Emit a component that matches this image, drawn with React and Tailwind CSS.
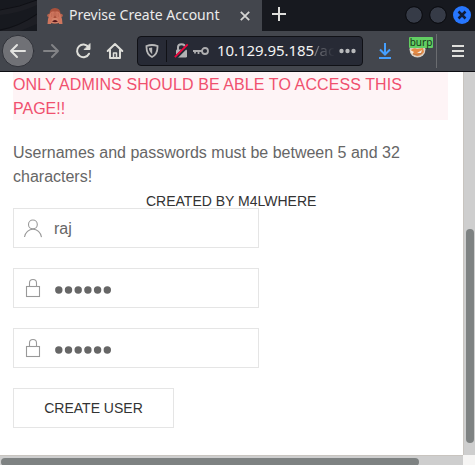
import React from 'react';

const Lock = () => (
  <svg width="20" height="20" viewBox="0 0 20 20" fill="none" stroke="#999" strokeWidth="1.1">
    <rect width="13" height="10" x="3.5" y="8.5" />
    <path d="M6.5,8 L6.5,4.88 C6.5,3.01 8.07,1.5 10,1.5 C11.93,1.5 13.5,3.01 13.5,4.88 L13.5,8" />
  </svg>
);

const User = () => (
  <svg width="20" height="20" viewBox="0 0 20 20" fill="none" stroke="#999" strokeWidth="1.1">
    <circle cx="9.9" cy="6.4" r="4.4" />
    <path d="M1.5,19 C2.3,14.5 5.8,11.2 10,11.2 C14.2,11.2 17.7,14.6 18.5,19.2" />
  </svg>
);

const Monkey = () => (
  <svg className="ml-[10px] shrink-0" width="16" height="16" viewBox="0 0 16 16">
    <path d="M2.5 6Q2.500 0 8 0Q13.500 0 13.500 6L14 14Q8 17 2 14Z" fill="#a9513c" />
    <circle cx="1.9" cy="7.500" r="1.7" fill="#b5634e" />
    <circle cx="14.1" cy="7.500" r="1.7" fill="#b5634e" />
    <path d="M3 10H13L12.500 14.500Q8 16.500 3.500 14.500Z" fill="#d5846b" />
    <path d="M.5 16L1 11L3 5L5 3.500H7.700V7.500Q6.500 10.500 5 11L4 16Z" fill="#cf765e" />
    <path d="M15.500 16L15 11L13 5L11 3.500H8.300V7.500Q9.500 10.500 11 11L12 16Z" fill="#cf765e" />
    <path d="M4.500 5V9M6.200 4.700V8.500M11.500 5V9M9.800 4.700V8.500" stroke="#b9624c" strokeWidth=".5" />
    <path d="M5 13.500Q8 10.500 11 13.500Q8 14.800 5 13.500Z" fill="#54151b" />
  </svg>
);

const TitleBar = () => (
  <div className="flex h-[31px] bg-[#17191f]">
    <svg className="shrink-0" width="37" height="31">
      <path d="M0 9Q20 6 37 0V5Q20 13 0 15ZM0 31Q20 26 37 15V24L20 31Z" fill="#1d1e24" />
      <path d="M0 10Q20 7 37 0M0 30Q18 27 37 14" fill="none" stroke="#0f1015" strokeWidth="1" />
    </svg>
    <div className="flex w-[225px] items-center bg-[#43464d]">
      <Monkey />
      <span className="ml-[6px] w-[152px] shrink-0 whitespace-nowrap pb-[2px] font-['Noto_Sans',sans-serif] text-[14px] leading-[28px] text-[#ebebeb]">Previse Create Account</span>
      <svg className="ml-[19px] shrink-0" width="10" height="10" fill="none" stroke="#d4d4d2" strokeWidth="1.8"><path d="M.8 .8L9.2 9.2M9.2 .8L.8 9.2" /></svg>
    </div>
    <svg className="mt-[7px] ml-[10px] shrink-0" width="14" height="14" fill="none" stroke="#dededb" strokeWidth="2"><path d="M7 0V14M0 7H14" /></svg>
    <svg className="ml-auto shrink-0" width="72" height="31">
      <circle cx="11" cy="15" r="8.3" fill="#363b47" stroke="#08090d" />
      <circle cx="35" cy="15" r="8.3" fill="#363b47" stroke="#08090d" />
      <circle cx="59" cy="15" r="9" fill="#2777ff" />
      <path d="M55.5 11.5L62.5 18.5M62.5 11.5L55.5 18.5" stroke="#101c36" strokeWidth="2.5" />
    </svg>
  </div>
);

const AddressBar = () => (
  <div className="flex h-[30px] w-[226px] items-center rounded-[4px] border border-[#101116] bg-[#272a35]">
    <svg className="ml-[7px] shrink-0" width="14" height="14" viewBox="0 0 14 14" fill="none" stroke="#b8b8b8" strokeWidth="1.8">
      <path d="M1.5 2Q7 0 12.5 2Q12.9 10 7 13Q1.1 10 1.5 2Z" />
      <path d="M7.2 3.4V10.3Q3.9 7.5 4 4Z" fill="#b8b8b8" stroke="none" />
    </svg>
    <div className="ml-[7px] h-[22px] w-px shrink-0 bg-[#101116]" />
    <svg className="ml-[7px] shrink-0" width="15" height="16" viewBox="0 0 15 16">
      <path d="M4 7V4Q4 1.2 7.5 1.2T11 4V7" fill="none" stroke="#b1b1b3" strokeWidth="2" />
      <rect x="2" y="6.5" width="11" height="8" rx="1.2" fill="#b1b1b3" />
      <path d="M1.8 14.5L14 2.2" stroke="#272a35" strokeWidth="3.5" />
      <path d="M.8 14.2L13.7 1.3" stroke="#f1073e" strokeWidth="1.8" />
    </svg>
    <svg className="ml-[4px] shrink-0" width="16" height="10" viewBox="0 0 16 10" fill="none" stroke="#adadaf" strokeWidth="1.8">
      <circle cx="12" cy="5" r="3" /><path d="M9 5H0M2 5V7.5M5.5 5V8" />
    </svg>
    <span className="ml-[8px] w-[116px] shrink-0 whitespace-nowrap pb-px font-['Noto_Sans',sans-serif] text-[15px] leading-[27px] tracking-[-0.06px] text-[#f2f2f2]">10.129.95.185<span className="bg-linear-to-r from-[#85868b] to-[#272a35] bg-clip-text text-transparent">/ac</span></span>
    <svg className="ml-[6px] shrink-0" width="17" height="6" fill="#b8b9bb"><circle cx="2.5" cy="3" r="2.2" /><circle cx="8.5" cy="3" r="2.2" /><circle cx="14.5" cy="3" r="2.2" /></svg>
  </div>
);

const Toolbar = () => (
  <div className="flex h-[41px] items-center border-b border-[#0c0d12] bg-[#43464d]">
    <svg className="shrink-0" width="137" height="40" fill="none" strokeLinecap="round" strokeLinejoin="round">
      <circle cx="18" cy="20" r="15.7" fill="#707176" stroke="#303239" />
      <path d="M25 20H11M17 14L11 20L17 26" stroke="#e3e3e0" strokeWidth="2" />
      <path d="M44 20H58M52 14L58 20L52 26" stroke="#828386" strokeWidth="2" />
      <path d="M88.5 16.2A6.3 6.3 0 1 0 89 22.7" stroke="#deded9" strokeWidth="2" />
      <path d="M90 13V18.5H84.5Z" fill="#deded9" stroke="#deded9" strokeWidth="1" />
      <path d="M107.7 20L115 13L122.3 20M110 19V27H120V19" stroke="#deded9" strokeWidth="2" />
      <path d="M113.5 26V22H116.5V26" stroke="#deded9" strokeWidth="1.5" />
    </svg>
    <AddressBar />
    <svg className="ml-[15px] shrink-0" width="14" height="18" fill="none" stroke="#459fff" strokeWidth="2"><path d="M7 1V12M2 7.5L7 12.5L12 7.5M1 16H13" /></svg>
    <div className="relative ml-[17px] h-[22px] w-[24px] shrink-0">
      <svg className="absolute top-[1px] left-0" width="17" height="17" viewBox="0 0 17 17">
        <circle cx="8.5" cy="8.500" r="8" fill="#d9cfc4" />
        <path d="M2 9Q5 6 8 8L14 7L15 11Q12 15 8 15Q3 14 2 9Z" fill="#e58a44" />
        <path d="M1 9L5 11L3 13ZM8 12L13 9L12 12Z" fill="#f7ede0" />
        <path d="M4 13Q8 15 13 12" fill="none" stroke="#b97a50" />
      </svg>
      <span className="absolute top-[-3px] left-0 h-[11px] w-[24px] rounded-[1px] bg-[#62ce63] text-center font-['Noto_Sans',sans-serif] text-[10px] leading-[10px] text-[#16351a]">burp</span>
    </div>
    <div className="ml-[3px] h-[34px] w-px bg-[#6a6c70]" />
    <svg className="ml-[15px] shrink-0" width="12" height="12" stroke="#dfdfdc" strokeWidth="2"><path d="M0 1H12M0 6H12M0 11H12" /></svg>
  </div>
);

const Field = ({ icon, value, password }) => (
  <div className="flex h-10 w-[246px] items-center border border-[#e5e5e5] bg-white pl-[9px]">
    {icon}
    {password ? (
      <svg className="mt-[3px] ml-[12px]" width="58" height="8" fill="#666" aria-label="Password">
        {[0, 1, 2, 3, 4, 5].map((i) => <circle key={i} cx={3.8 + i * 9.7} cy="4" r="3.7" />)}
      </svg>
    ) : <span className="ml-[11px] pt-[2px] text-base text-[#666]">{value}</span>}
  </div>
);

export default function App() {
  return (
    <div className="flex h-[465px] w-[475px] flex-col overflow-hidden bg-white font-['Liberation_Sans',Arial,sans-serif]">
      <TitleBar />
      <Toolbar />
      <div className="flex h-[383px]">
        <main className="w-[463px] pl-[13px]">
          <div className="h-12 w-[435px] bg-[#fef4f6] pt-px text-base leading-6 text-[#f0506e]"><span className="tracking-[0.09px]">ONLY ADMINS SHOULD BE ABLE TO ACCESS THIS</span><br />PAGE!!</div>
          <p className="mt-[21px] text-base leading-6 text-[#666]">Usernames and passwords must be between 5 and 32<br />characters!</p>
          <div className="mt-[4px] ml-[133px] h-[15px] whitespace-nowrap text-[14px] leading-[16px] text-[#333]">CREATED BY M4LWHERE</div>
          <form className="flex flex-col gap-5">
            <Field icon={<User />} value="raj" />
            <Field icon={<Lock />} password />
            <Field icon={<Lock />} password />
            <button type="button" className="h-10 w-[161px] border border-[#e5e5e5] text-[14px] leading-[38px] text-[#333]">CREATE USER</button>
          </form>
        </main>
        <div className="w-3 border-l border-[#c8c4bf] bg-[#cecece] pt-[157px] pl-[2px]">
          <div className="h-[214px] w-2 rounded-full bg-[#7e8282]" />
        </div>
      </div>
      <div className="flex h-[10px]">
        <div className="w-[463px] overflow-hidden border-t border-[#c8c4bf] bg-[#cecece] pt-[2px] pl-px">
          <div className="h-2 w-[418px] rounded-full bg-[#7e8282]" />
        </div>
        <div className="w-3 bg-[#f6f5f4]" />
      </div>
    </div>
  );
}
